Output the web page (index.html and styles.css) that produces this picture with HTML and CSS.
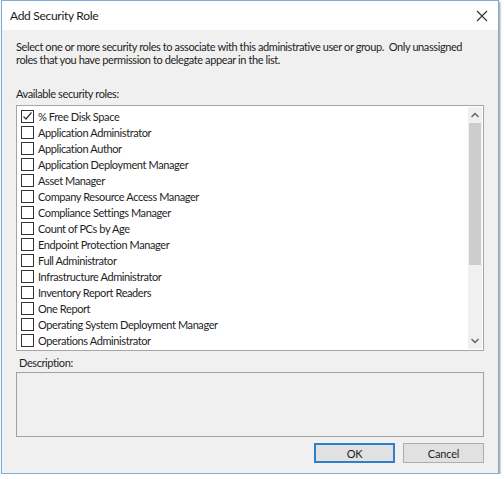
FILE: index.html
```html
<!DOCTYPE html>
<html>
<head>
<meta charset="utf-8">
<link rel="stylesheet" href="styles.css">
</head>
<body>
<div class="window">
  <div class="titlebar">
    <span class="title">Add Security Role</span>
    <svg class="close" width="12" height="12" viewBox="0 0 12 12"><path d="M1 1 L11 11 M11 1 L1 11" stroke="#333" stroke-width="1.1" fill="none"/></svg>
  </div>
  <div class="content">
    <p class="intro">Select one or more security roles to associate with this administrative user or group.&nbsp; Only unassigned roles that you have permission to delegate appear in the list.</p>
    <div class="label avail">Available security roles:</div>
    <div class="listbox">
      <ul class="items">
        <li><span class="cb checked"><svg width="11" height="11" viewBox="0 0 11 11"><path d="M1.5 5.5 L4 8 L9.5 1.5" stroke="#333" stroke-width="1.2" fill="none"/></svg></span>% Free Disk Space</li>
        <li><span class="cb"></span>Application Administrator</li>
        <li><span class="cb"></span>Application Author</li>
        <li><span class="cb"></span>Application Deployment Manager</li>
        <li><span class="cb"></span>Asset Manager</li>
        <li><span class="cb"></span>Company Resource Access Manager</li>
        <li><span class="cb"></span>Compliance Settings Manager</li>
        <li><span class="cb"></span>Count of PCs by Age</li>
        <li><span class="cb"></span>Endpoint Protection Manager</li>
        <li><span class="cb"></span>Full Administrator</li>
        <li><span class="cb"></span>Infrastructure Administrator</li>
        <li><span class="cb"></span>Inventory Report Readers</li>
        <li><span class="cb"></span>One Report</li>
        <li><span class="cb"></span>Operating System Deployment Manager</li>
        <li><span class="cb"></span>Operations Administrator</li>
      </ul>
      <div class="scrollbar">
        <svg class="arrow" width="14" height="16" viewBox="0 0 14 16"><path d="M3.5 10 L7 6.5 L10.5 10" stroke="#606060" stroke-width="1.4" fill="none"/></svg>
        <div class="track"><div class="thumb"></div></div>
        <svg class="arrow" width="14" height="16" viewBox="0 0 14 16"><path d="M3.5 6 L7 9.5 L10.5 6" stroke="#606060" stroke-width="1.4" fill="none"/></svg>
      </div>
    </div>
    <div class="label desc">Description:</div>
    <div class="descbox"></div>
    <div class="buttons">
      <button class="btn ok">OK</button>
      <button class="btn">Cancel</button>
    </div>
  </div>
</div>
</body>
</html>
```
FILE: styles.css
```css
html, body {
  margin: 0;
  padding: 0;
  background: #ffffff;
}
body {
  font-family: Lato, "Open Sans", "Liberation Sans", sans-serif;
  font-size: 11px;
  letter-spacing: -0.4px;
  color: #1e1e1e;
}
.window {
  width: 496px;
  height: 472px;
  margin-left: 1px;
  border: 1px solid #7eaed8;
  background: #f0f0f0;
  box-shadow: 1px 2px 2px rgba(40, 50, 60, 0.55);
  display: flex;
  flex-direction: column;
}
.titlebar {
  height: 29px;
  background: #ffffff;
  display: flex;
  align-items: center;
  justify-content: space-between;
  padding: 0 10px 0 8px;
}
.title {
  font-size: 12px;
  letter-spacing: -0.3px;
  color: #1a1a1a;
}
.close {
  display: block;
}
.content {
  flex: 1;
  padding: 10px 14px 0 14px;
  display: flex;
  flex-direction: column;
}
.intro {
  margin: 0;
  line-height: 13px;
  width: 455px;
}
.label {
  line-height: 13px;
}
.avail {
  margin-top: 21px;
}
.listbox {
  margin-top: 5px;
  height: 244px;
  border: 1px solid #a6a6a6;
  background: #ffffff;
  display: flex;
}
.items {
  list-style: none;
  margin: 0;
  padding: 2px 0 0 4px;
  flex: 1;
}
.items li {
  height: 16px;
  display: flex;
  align-items: center;
  white-space: nowrap;
}
.cb {
  width: 11px;
  height: 11px;
  border: 1px solid #333333;
  background: #ffffff;
  margin-right: 4px;
  flex: none;
  display: flex;
}
.scrollbar {
  width: 14px;
  margin: 1px 1px 1px 0;
  background: #f0f0f0;
  display: flex;
  flex-direction: column;
}
.arrow {
  display: block;
  flex: none;
}
.track {
  flex: 1;
}
.thumb {
  height: 142px;
  background: #cdcdcd;
  margin: 0 1px;
}
.desc {
  margin-top: 5px;
  padding-left: 3px;
}
.descbox {
  margin-top: 3px;
  height: 63px;
  border: 1px solid #a0a0a0;
  background: #f0f0f0;
}
.buttons {
  margin-top: 6px;
  display: flex;
  justify-content: flex-end;
  gap: 8px;
}
.btn {
  width: 81px;
  height: 20px;
  font-family: inherit;
  font-size: 11px;
  letter-spacing: -0.2px;
  color: #1e1e1e;
  background: #e1e1e1;
  border: 1px solid #adadad;
  padding: 0;
}
.btn.ok {
  border: 2px solid #2f7fd0;
}
```
